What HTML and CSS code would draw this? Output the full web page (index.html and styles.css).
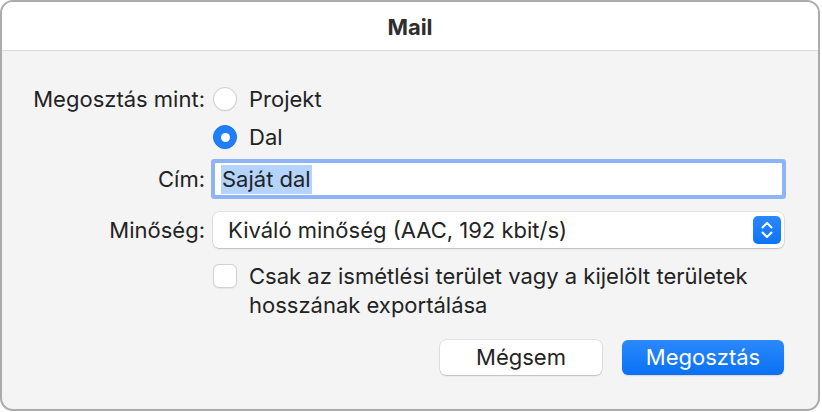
FILE: index.html
```html
<!DOCTYPE html>
<html lang="hu">
<head>
<meta charset="utf-8">
<title>Mail</title>
<link rel="stylesheet" href="styles.css">
</head>
<body>
<div class="window">
  <header class="titlebar">Mail</header>
  <main class="form">
    <div class="label">Megosztás mint:</div>
    <label class="option"><span class="radio"></span><span>Projekt</span></label>

    <div class="spacer"></div>
    <label class="option option-second"><span class="radio checked"></span><span>Dal</span></label>

    <div class="label label-field">Cím:</div>
    <div class="field"><span class="selection">Saját dal</span></div>

    <div class="label label-popup">Minőség:</div>
    <div class="popup">
      <span class="popup-text">Kiváló minőség (AAC, 192 kbit/s)</span>
      <span class="stepper">
        <svg width="28" height="28" viewBox="0 0 28 28" aria-hidden="true">
          <path d="M9.5 11.5 L14 7 L18.5 11.5" fill="none" stroke="#fff" stroke-width="2" stroke-linecap="round" stroke-linejoin="round"/>
          <path d="M9.5 16.5 L14 21 L18.5 16.5" fill="none" stroke="#fff" stroke-width="2" stroke-linecap="round" stroke-linejoin="round"/>
        </svg>
      </span>
    </div>

    <div class="spacer"></div>
    <label class="check"><span class="box"></span><span class="check-text">Csak az ismétlési terület vagy a kijelölt területek hosszának exportálása</span></label>

    <div class="buttons">
      <button class="btn btn-secondary" type="button">Mégsem</button>
      <button class="btn btn-primary" type="button">Megosztás</button>
    </div>
  </main>
</div>
</body>
</html>
```

FILE: styles.css
```css
* { box-sizing: border-box; }

html, body {
  margin: 0;
  padding: 0;
  background: #ffffff;
}

body {
  font-family: "Inter", "Noto Sans", "Liberation Sans", sans-serif;
  font-size: 22px;
  color: #232323;
}

.window {
  width: 820px;
  height: 411px;
  border: 2px solid #ababab;
  border-radius: 13px;
  overflow: hidden;
  background: #f4f4f4;
  display: flex;
  flex-direction: column;
}

.titlebar {
  height: 49px;
  flex: none;
  background: #ffffff;
  border-bottom: 1px solid #dcdcdc;
  display: flex;
  align-items: center;
  justify-content: center;
  font-weight: 700;
  font-size: 22px;
  color: #2e2e2e;
  padding-top: 1px;
}

.form {
  display: grid;
  grid-template-columns: 203px 1fr;
  column-gap: 8px;
  padding: 36px 34px 0 0;
  align-items: center;
}

.label {
  text-align: right;
  line-height: 24px;
  white-space: nowrap;
}

.option {
  display: flex;
  align-items: center;
  gap: 12px;
  height: 24px;
  line-height: 24px;
}

.option-second { margin-top: 14px; }

.radio {
  width: 24px;
  height: 24px;
  border-radius: 50%;
  background: #ffffff;
  border: 1px solid #cdcdcd;
  box-shadow: 0 0.5px 1px rgba(0,0,0,0.08);
  flex: none;
  position: relative;
}

.radio.checked {
  background: #1f7ff9;
  border-color: #1a76f0;
}

.radio.checked::after {
  content: "";
  position: absolute;
  left: 50%;
  top: 50%;
  width: 9px;
  height: 9px;
  margin: -4.5px 0 0 -4.5px;
  border-radius: 50%;
  background: #ffffff;
}

.label-field { margin-top: 14px; }

.field {
  margin: 14px 2px 0 2px;
  height: 32px;
  background: #ffffff;
  box-shadow: 0 0 0 4px #8fb4f5;
  border-radius: 1px;
  display: flex;
  align-items: center;
  padding-left: 6px;
}

.selection {
  background: #b4d4fd;
  line-height: 29px;
  padding: 0 1px;
}

.label-popup { margin-top: 17px; }

.popup {
  margin-top: 17px;
  height: 36px;
  background: #ffffff;
  border-radius: 6px;
  box-shadow: 0 0 0 0.5px rgba(0,0,0,0.14), 0 1px 1.5px rgba(0,0,0,0.16);
  display: flex;
  align-items: center;
  justify-content: space-between;
  padding: 0 3px 0 15px;
}

.stepper {
  width: 28px;
  height: 28px;
  border-radius: 5px;
  background: linear-gradient(#2a88fb, #0d73f6);
  display: block;
}

.stepper svg { display: block; }

.check {
  margin-top: 14px;
  display: flex;
  align-items: flex-start;
  gap: 12px;
  line-height: 29px;
}

.box {
  flex: none;
  width: 24px;
  height: 24px;
  margin-top: 2px;
  border-radius: 6px;
  background: #ffffff;
  border: 1px solid #d0d0d0;
  box-shadow: 0 0.5px 1px rgba(0,0,0,0.06);
}

.check-text { max-width: 540px; }

.buttons {
  grid-column: 1 / -1;
  display: flex;
  justify-content: flex-end;
  gap: 20px;
  margin-top: 20px;
}

.btn {
  font-family: inherit;
  font-size: 22px;
  height: 35px;
  width: 162px;
  border-radius: 6px;
  border: none;
  padding: 0;
  line-height: 35px;
}

.btn-secondary {
  background: #ffffff;
  color: #232323;
  box-shadow: 0 0 0 0.5px rgba(0,0,0,0.14), 0 1px 1.5px rgba(0,0,0,0.16);
}

.btn-primary {
  background: linear-gradient(#2b89fb, #0a71f5);
  color: #ffffff;
  box-shadow: 0 1px 1.5px rgba(0,0,0,0.12);
}
```
